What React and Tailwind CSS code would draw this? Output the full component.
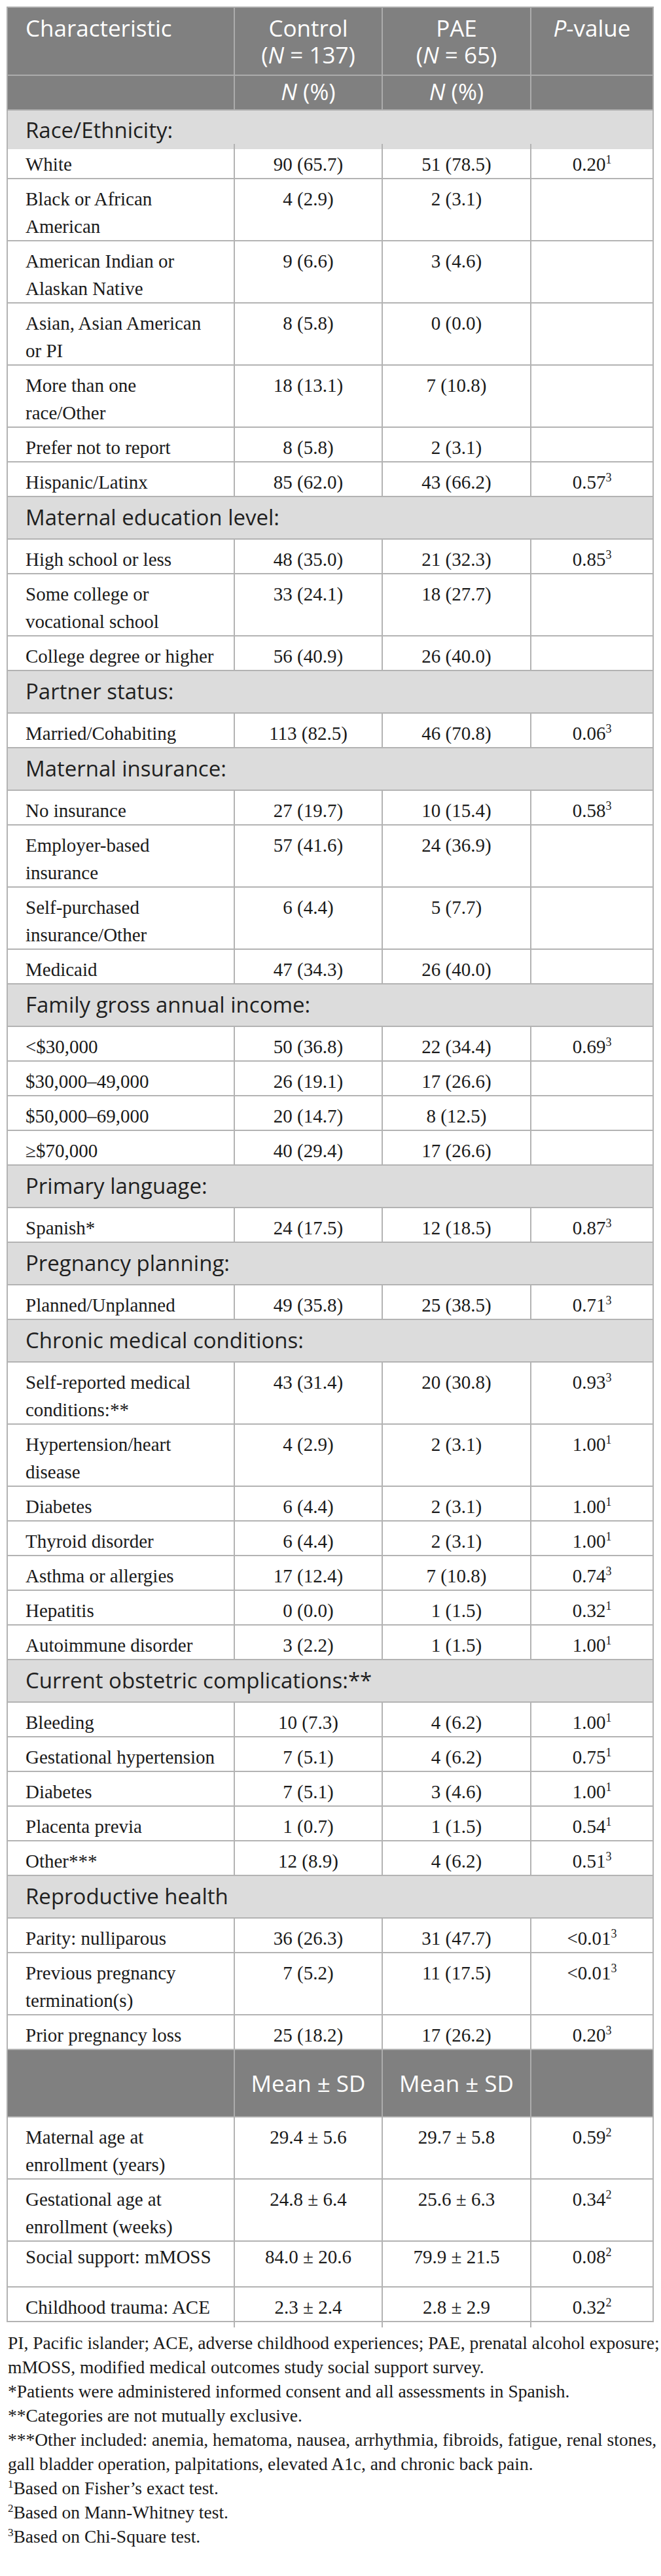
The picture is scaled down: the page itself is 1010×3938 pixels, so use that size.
import React from 'react';

const sans = "font-['Open_Sans',sans-serif]";
const serif = "font-['Liberation_Serif','Times_New_Roman',serif]";
const line = 'border-2 border-[#b3b3b3]';
const headLine = 'border-2 border-[#acacac]';

const rows = [
    { section: 'Race/Ethnicity:', tight: true },
    { label: 'White', c: '90 (65.7)', p: '51 (78.5)', v: '0.20', s: '1', first: true },
    { label: 'Black or African\nAmerican', c: '4 (2.9)', p: '2 (3.1)' },
    { label: 'American Indian or\nAlaskan Native', c: '9 (6.6)', p: '3 (4.6)' },
    { label: 'Asian, Asian American\nor PI', c: '8 (5.8)', p: '0 (0.0)' },
    { label: 'More than one\nrace/Other', c: '18 (13.1)', p: '7 (10.8)' },
    { label: 'Prefer not to report', c: '8 (5.8)', p: '2 (3.1)' },
    { label: 'Hispanic/Latinx', c: '85 (62.0)', p: '43 (66.2)', v: '0.57', s: '3' },
    { section: 'Maternal education level:' },
    { label: 'High school or less', c: '48 (35.0)', p: '21 (32.3)', v: '0.85', s: '3' },
    { label: 'Some college or\nvocational school', c: '33 (24.1)', p: '18 (27.7)' },
    { label: 'College degree or higher', c: '56 (40.9)', p: '26 (40.0)' },
    { section: 'Partner status:' },
    { label: 'Married/Cohabiting', c: '113 (82.5)', p: '46 (70.8)', v: '0.06', s: '3' },
    { section: 'Maternal insurance:' },
    { label: 'No insurance', c: '27 (19.7)', p: '10 (15.4)', v: '0.58', s: '3' },
    { label: 'Employer-based\ninsurance', c: '57 (41.6)', p: '24 (36.9)' },
    { label: 'Self-purchased\ninsurance/Other', c: '6 (4.4)', p: '5 (7.7)' },
    { label: 'Medicaid', c: '47 (34.3)', p: '26 (40.0)' },
    { section: 'Family gross annual income:' },
    { label: '<$30,000', c: '50 (36.8)', p: '22 (34.4)', v: '0.69', s: '3' },
    { label: '$30,000–49,000', c: '26 (19.1)', p: '17 (26.6)' },
    { label: '$50,000–69,000', c: '20 (14.7)', p: '8 (12.5)' },
    { label: '≥$70,000', c: '40 (29.4)', p: '17 (26.6)' },
    { section: 'Primary language:' },
    { label: 'Spanish*', c: '24 (17.5)', p: '12 (18.5)', v: '0.87', s: '3' },
    { section: 'Pregnancy planning:' },
    { label: 'Planned/Unplanned', c: '49 (35.8)', p: '25 (38.5)', v: '0.71', s: '3' },
    { section: 'Chronic medical conditions:' },
    { label: 'Self-reported medical\nconditions:**', c: '43 (31.4)', p: '20 (30.8)', v: '0.93', s: '3' },
    { label: 'Hypertension/heart\ndisease', c: '4 (2.9)', p: '2 (3.1)', v: '1.00', s: '1' },
    { label: 'Diabetes', c: '6 (4.4)', p: '2 (3.1)', v: '1.00', s: '1' },
    { label: 'Thyroid disorder', c: '6 (4.4)', p: '2 (3.1)', v: '1.00', s: '1' },
    { label: 'Asthma or allergies', c: '17 (12.4)', p: '7 (10.8)', v: '0.74', s: '3' },
    { label: 'Hepatitis', c: '0 (0.0)', p: '1 (1.5)', v: '0.32', s: '1' },
    { label: 'Autoimmune disorder', c: '3 (2.2)', p: '1 (1.5)', v: '1.00', s: '1' },
    { section: 'Current obstetric complications:**' },
    { label: 'Bleeding', c: '10 (7.3)', p: '4 (6.2)', v: '1.00', s: '1' },
    { label: 'Gestational hypertension', c: '7 (5.1)', p: '4 (6.2)', v: '0.75', s: '1' },
    { label: 'Diabetes', c: '7 (5.1)', p: '3 (4.6)', v: '1.00', s: '1' },
    { label: 'Placenta previa', c: '1 (0.7)', p: '1 (1.5)', v: '0.54', s: '1' },
    { label: 'Other***', c: '12 (8.9)', p: '4 (6.2)', v: '0.51', s: '3' },
    { section: 'Reproductive health' },
    { label: 'Parity: nulliparous', c: '36 (26.3)', p: '31 (47.7)', v: '<0.01', s: '3' },
    { label: 'Previous pregnancy\ntermination(s)', c: '7 (5.2)', p: '11 (17.5)', v: '<0.01', s: '3' },
    { label: 'Prior pregnancy loss', c: '25 (18.2)', p: '17 (26.2)', v: '0.20', s: '3' },
    { sub: 'Mean ± SD' },
    { label: 'Maternal age at\nenrollment (years)', c: '29.4 ± 5.6', p: '29.7 ± 5.8', v: '0.59', s: '2' },
    { label: 'Gestational age at\nenrollment (weeks)', c: '24.8 ± 6.4', p: '25.6 ± 6.3', v: '0.34', s: '2' },
    { label: 'Social support: mMOSS', c: '84.0 ± 20.6', p: '79.9 ± 21.5', v: '0.08', s: '2', tall: true },
    { label: 'Childhood trauma: ACE', c: '2.3 ± 2.4', p: '2.8 ± 2.9', v: '0.32', s: '2' },
];

const notes = [
    'PI, Pacific islander; ACE, adverse childhood experiences; PAE, prenatal alcohol exposure;',
    'mMOSS, modified medical outcomes study social support survey.',
    '*Patients were administered informed consent and all assessments in Spanish.',
    '**Categories are not mutually exclusive.',
    '***Other included: anemia, hematoma, nausea, arrhythmia, fibroids, fatigue, renal stones,',
    'gall bladder operation, palpitations, elevated A1c, and chronic back pain.',
];

const tests = [
    ['1', 'Based on Fisher’s exact test.'],
    ['2', 'Based on Mann-Whitney test.'],
    ['3', 'Based on Chi-Square test.'],
];

// little vertical tick that runs up into the grey band above the first row
const Tick = () => <span className="absolute -left-[2px] -top-[8px] h-[8px] w-[2px] bg-[#b3b3b3]"></span>;

const DataRow = ({ row }) => {
    const pad = row.first ? 'pt-[2px] border-t-0' : row.tall ? 'pt-[2px] pb-[24px]' : 'pt-[9px]';
    const cell = `${line} ${pad} align-top leading-[42px] relative`;
    return (
        <tr>
            <td className={`${cell} pl-[27px] pr-2 text-left`}>
                {row.label.split('\n').map((l, i) => (
                    <div key={i} className="whitespace-nowrap">{l}</div>
                ))}
            </td>
            <td className={`${cell} text-center`}>
                {row.first && <Tick />}
                {row.c}
            </td>
            <td className={`${cell} text-center`}>
                {row.first && <Tick />}
                {row.p}
            </td>
            <td className={`${cell} text-center`}>
                {row.first && <Tick />}
                {row.v}
                {row.s && <sup className="text-[18px] -top-[11px]">{row.s}</sup>}
            </td>
        </tr>
    );
};

export default function App() {
    return (
        <div className={`min-h-[3938px] bg-white pt-[10px] pl-[10px] text-[#1a1a1a] ${serif}`}>
            <table className="table-fixed border-collapse w-[987px] text-[29px]">
                <colgroup>
                    <col className="w-[347px]" />
                    <col className="w-[226px]" />
                    <col className="w-[227px]" />
                    <col className="w-[187px]" />
                </colgroup>
                <thead className={`${sans} text-white bg-[#808080] text-[35px] leading-[41px]`}>
                    <tr>
                        <th className={`${headLine} align-top pt-[10px] pb-[10px] pl-[27px] text-left font-normal`}>Characteristic</th>
                        <th className={`${headLine} align-top pt-[10px] pb-[10px] font-normal`}>
                            <div>Control</div>
                            <div>(<i>N</i> = 137)</div>
                        </th>
                        <th className={`${headLine} align-top pt-[10px] pb-[10px] font-normal`}>
                            <div>PAE</div>
                            <div>(<i>N</i> = 65)</div>
                        </th>
                        <th className={`${headLine} align-top pt-[10px] pb-[10px] font-normal`}>
                            <i>P</i>-value
                        </th>
                    </tr>
                    <tr>
                        <th className={`${headLine} pt-[3px] pb-[7px]`}></th>
                        <th className={`${headLine} pt-[3px] pb-[7px] font-normal`}><i>N</i> (%)</th>
                        <th className={`${headLine} pt-[3px] pb-[7px] font-normal`}><i>N</i> (%)</th>
                        <th className={`${headLine} pt-[3px] pb-[7px]`}></th>
                    </tr>
                </thead>
                <tbody>
                    {rows.map((row, i) => {
                        if (row.section) {
                            return (
                                <tr key={i}>
                                    <td
                                        colSpan={4}
                                        className={`${line} ${row.tight ? 'border-b-0 pt-[10px] pb-[9px]' : 'pt-[11px] pb-[12px]'} bg-[#dcdcdc] ${sans} text-[33px] leading-[40px] pl-[27px] text-[#1f1f1f]`}
                                    >
                                        {row.section}
                                    </td>
                                </tr>
                            );
                        }
                        if (row.sub) {
                            return (
                                <tr key={i} className={`${sans} bg-[#808080] text-white text-[35px] leading-[41px]`}>
                                    <td className={`${headLine} h-[103px]`}></td>
                                    <td className={`${headLine} h-[103px] text-center align-middle`}>{row.sub}</td>
                                    <td className={`${headLine} h-[103px] text-center align-middle`}>{row.sub}</td>
                                    <td className={`${headLine} h-[103px]`}></td>
                                </tr>
                            );
                        }
                        return <DataRow key={i} row={row} />;
                    })}
                </tbody>
            </table>
            <div className="flex h-[8px] w-[987px]">
                <div className="w-[347px]"></div>
                <div className="w-[226px] border-l-2 border-[#b3b3b3]"></div>
                <div className="w-[227px] border-l-2 border-[#b3b3b3]"></div>
                <div className="w-[187px] border-l-2 border-[#b3b3b3]"></div>
            </div>
            <div className="mt-[5px] pl-[2px] text-[27.5px] leading-[37px]">
                {notes.map((n, i) => (
                    <div key={i} className="whitespace-nowrap">{n}</div>
                ))}
                {tests.map(([s, t]) => (
                    <div key={s} className="whitespace-nowrap">
                        <sup className="text-[17px] -top-[10px]">{s}</sup>{t}
                    </div>
                ))}
            </div>
        </div>
    );
}
